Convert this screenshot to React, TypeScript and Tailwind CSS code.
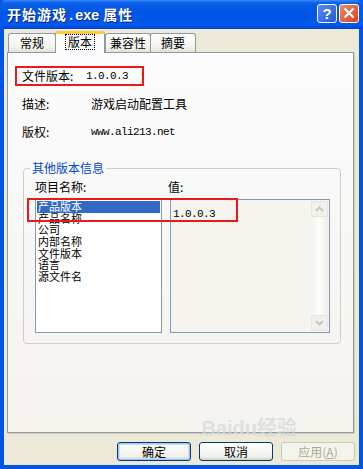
import React from 'react';

const cjk = { fontFamily: '"Noto Sans CJK SC", "Noto Sans", sans-serif' };
const mono = { fontFamily: '"Liberation Mono", "Noto Sans CJK SC", monospace' };

const tabs = [
  { label: '常规', w: 'w-[48px]' },
  { label: '版本', w: 'w-[50px]', active: true },
  { label: '兼容性', w: 'w-[46px]' },
  { label: '摘要', w: 'w-[46px]' },
];

const items = ['产品版本', '产品名称', '公司', '内部名称', '文件版本', '语言', '源文件名'];

const Chevron = ({ up }: { up?: boolean }) => (
  <svg width="9" height="6" viewBox="0 0 9 6">
    <path
      d={up ? 'M1 5 L4.5 1.5 L8 5' : 'M1 1 L4.5 4.5 L8 1'}
      fill="none"
      stroke="#c9c7ba"
      strokeWidth="2"
    />
  </svg>
);

const XpButton = ({ label, primary, disabled }: { label: React.ReactNode; primary?: boolean; disabled?: boolean }) => (
  <div
    className={`w-[74px] h-[19px] rounded-[3px] border flex items-center justify-center text-[12px] ${
      disabled
        ? 'border-[#c9c7ba] bg-[#f5f4ea] text-[#aca899]'
        : 'border-[#003c74] bg-[linear-gradient(to_bottom,#ffffff,#f0f0ea_80%,#d6d0c5)] text-black'
    } ${primary ? 'shadow-[inset_0_0_0_1px_#a8c4f0,inset_0_0_0_2px_#c9dbf8]' : ''}`}
    style={cjk}
  >
    {label}
  </div>
);

export default function App() {
  return (
    <div className="w-[363px] h-[469px] flex flex-col bg-[#0055e5] overflow-hidden" style={cjk}>
      {/* title bar */}
      <div className="h-[29px] shrink-0 flex items-center pl-[7px] pr-[4px] bg-[linear-gradient(to_bottom,#3d8bff_0%,#0a5fe8_10%,#0055e5_45%,#0058ee_85%,#0046d0_100%)] rounded-t-[6px]">
        <div className="flex-1 text-white font-bold text-[14px] tracking-[1px] leading-none [text-shadow:1px_1px_0_#0a1f7d] pt-[1px]">
          开始游戏<span style={mono} className="text-[14px] tracking-[-0.4px]">.exe</span> 属性
        </div>
        <div className="flex gap-[2px] -mt-[3px]">
          <div className="w-[20px] h-[19px] rounded-[3px] border border-white bg-[linear-gradient(135deg,#5a8cf5,#2457d8)] flex items-center justify-center text-white font-bold text-[15px] leading-none" style={{ fontFamily: '"Liberation Sans", sans-serif' }}>
            ?
          </div>
          <div className="w-[20px] h-[19px] rounded-[3px] border border-white bg-[linear-gradient(135deg,#e88a6a,#d9431c)] flex items-center justify-center">
            <svg width="12" height="12" viewBox="0 0 12 12">
              <path d="M1.5 1.5 L10.5 10.5 M10.5 1.5 L1.5 10.5" stroke="white" strokeWidth="2.2" />
            </svg>
          </div>
        </div>
      </div>

      {/* body */}
      <div className="flex-1 flex flex-col mx-[4px] mb-[4px] bg-[#ece9d8] pl-[3px] pr-[2px]">
        {/* tabs */}
        <div className="flex items-end h-[23px] pl-[1px] relative z-10">
          {tabs.map((t) =>
            t.active ? (
              <div
                key={t.label}
                className={`${t.w} h-[22px] -mb-[1px] bg-[#fcfcfe] border border-b-0 border-[#919b9c] border-t-[3px] border-t-[#ffc83c] rounded-t-[3px] flex items-start justify-center pt-[1px]`}
              >
                <span className="text-[12px] leading-[14px] outline outline-1 outline-dotted outline-black px-[2px]">{t.label}</span>
              </div>
            ) : (
              <div
                key={t.label}
                className={`${t.w} h-[19px] bg-[linear-gradient(to_bottom,#ffffff,#f3f3ef_70%,#e3e2da)] border border-b-0 border-[#919b9c] rounded-t-[3px] flex items-center justify-center text-[12px] leading-none -mr-[1px]`}
              >
                {t.label}
              </div>
            )
          )}
        </div>

        {/* panel */}
        <div className="w-[347px] h-[381px] border border-[#919b9c] shadow-[1px_1px_0_#d0cec0] bg-[linear-gradient(to_bottom,#fcfcfe,#f4f3ee)] flex flex-col text-[12px] text-black">
          <div className="mt-[13px] ml-[7px] w-[129px] h-[20px] border-2 border-[#ea1a1a] flex items-center">
            <span className="w-[69px] pl-[5px]">文件版本:</span>
            <span style={mono} className="text-[11px] tracking-[-0.6px]">1.0.0.3</span>
          </div>
          <div className="flex items-center h-[20px] mt-[8px] ml-[14px]">
            <span className="w-[69px]">描述:</span>
            <span>游戏启动配置工具</span>
          </div>
          <div className="flex items-center h-[20px] mt-[8px] ml-[14px]">
            <span className="w-[69px]">版权:</span>
            <span style={mono} className="text-[11px] tracking-[-0.6px]">www.ali213.net</span>
          </div>

          {/* group box */}
          <div className="relative mt-[26px] ml-[15px] w-[318px] h-[176px] border border-[#d0d0bf] rounded-[4px] flex flex-col">
            <span className="absolute -top-[9px] left-[6px] px-[2px] bg-[#f9f9f8] text-[#0046d5] leading-[16px]">其他版本信息</span>
            <div className="flex mt-[10px] ml-[11px] leading-[16px]">
              <span className="w-[133px]">项目名称:</span>
              <span>值:</span>
            </div>
            <div className="flex mt-[4px] ml-[11px] gap-[8px]">
              <div className="w-[127px] h-[134px] border border-[#7f9db9] bg-white p-[1px]">
                {items.map((it, i) => (
                  <div
                    key={it}
                    className={`h-[11.7px] leading-[11.7px] pl-[1px] text-[11px] ${i === 0 ? 'bg-[#316ac5] text-white' : ''}`}
                  >
                    {it}
                  </div>
                ))}
              </div>
              <div className="w-[160px] h-[134px] border border-[#7f9db9] bg-[#f5f4ef] flex">
                <div className="flex-1 pl-[2px] pt-[3px]">
                  <span style={mono} className="text-[11px] tracking-[-0.6px]">1.0.0.3</span>
                </div>
                <div className="w-[17px] mr-[1px] my-[1px] flex flex-col justify-between bg-[linear-gradient(to_right,#f3f3ee,#fdfdfb_50%,#eeede5)]">
                  <div className="h-[16px] rounded-[2px] border border-[#e8e6dc] bg-[#f1f0ea] flex items-center justify-center">
                    <Chevron up />
                  </div>
                  <div className="h-[16px] rounded-[2px] border border-[#e8e6dc] bg-[#f1f0ea] flex items-center justify-center">
                    <Chevron />
                  </div>
                </div>
              </div>
            </div>
            {/* annotation */}
            <div className="absolute left-[3px] top-[29px] w-[211px] h-[24px] border-2 border-[#ea1a1a]"></div>
          </div>
        </div>

        {/* buttons */}
        <div className="flex justify-end gap-[8px] mt-[9px] pr-[2px] relative">
          <XpButton label="确定" primary />
          <XpButton label="取消" />
          <XpButton
            label={
              <span>
                应用(<span className="underline">A</span>)
              </span>
            }
            disabled
          />
          <div className="absolute right-[60px] -top-[24px] text-[#d8d8d8] opacity-70 text-[20px] font-bold leading-none pointer-events-none" style={{ fontFamily: '"Liberation Sans", "Noto Sans CJK SC", sans-serif' }}>
            Baidu经验
          </div>
        </div>
      </div>
    </div>
  );
}
